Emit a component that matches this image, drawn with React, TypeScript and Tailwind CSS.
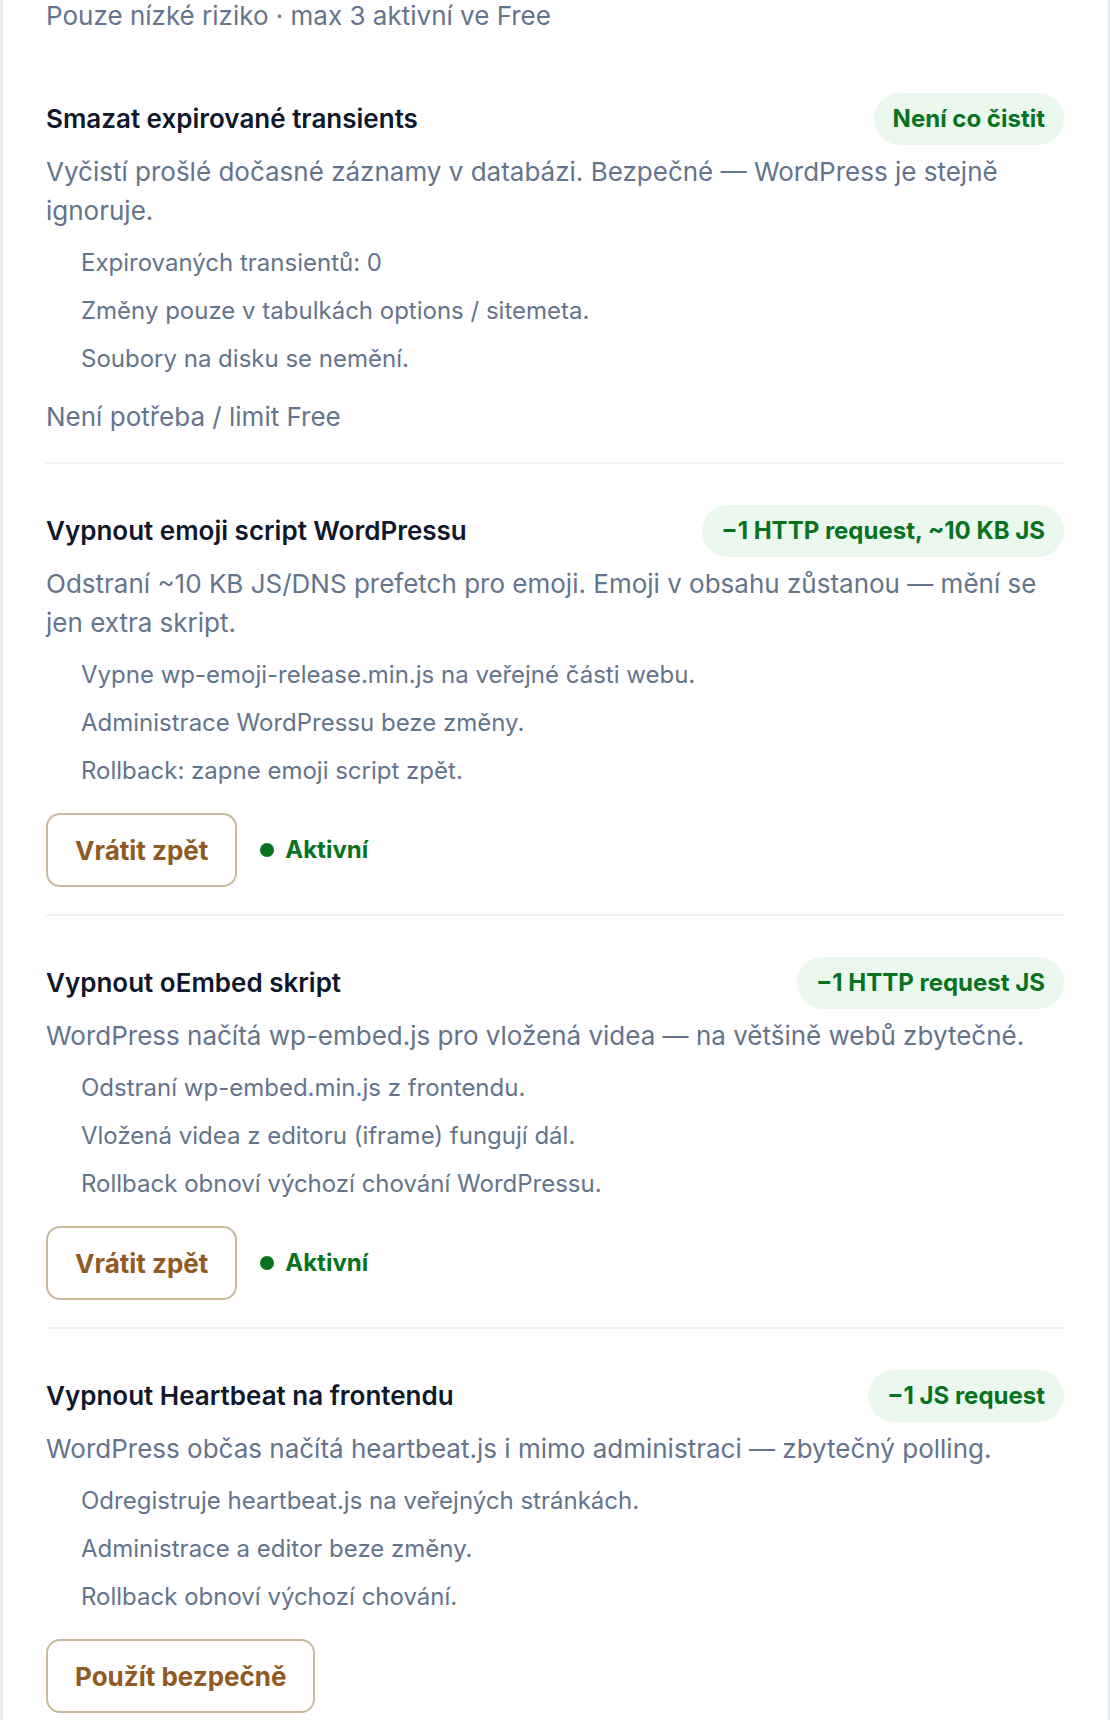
import React from "react";

type Tweak = {
  id: string;
  title: string;
  badge: string;
  description: string;
  notes: string[];
  state: "empty" | "active" | "idle";
};

const TWEAKS: Tweak[] = [
  {
    id: "transients",
    title: "Smazat expirované transients",
    badge: "Není co čistit",
    description: "Vyčistí prošlé dočasné záznamy v databázi. Bezpečné — WordPress je stejně ignoruje.",
    notes: [
      "Expirovaných transientů: 0",
      "Změny pouze v tabulkách options / sitemeta.",
      "Soubory na disku se nemění.",
    ],
    state: "empty",
  },
  {
    id: "emoji",
    title: "Vypnout emoji script WordPressu",
    badge: "−1 HTTP request, ~10 KB JS",
    description: "Odstraní ~10 KB JS/DNS prefetch pro emoji. Emoji v obsahu zůstanou — mění se jen extra skript.",
    notes: [
      "Vypne wp-emoji-release.min.js na veřejné části webu.",
      "Administrace WordPressu beze změny.",
      "Rollback: zapne emoji script zpět.",
    ],
    state: "active",
  },
  {
    id: "oembed",
    title: "Vypnout oEmbed skript",
    badge: "−1 HTTP request JS",
    description: "WordPress načítá wp-embed.js pro vložená videa — na většině webů zbytečné.",
    notes: [
      "Odstraní wp-embed.min.js z frontendu.",
      "Vložená videa z editoru (iframe) fungují dál.",
      "Rollback obnoví výchozí chování WordPressu.",
    ],
    state: "active",
  },
  {
    id: "heartbeat",
    title: "Vypnout Heartbeat na frontendu",
    badge: "−1 JS request",
    description: "WordPress občas načítá heartbeat.js i mimo administraci — zbytečný polling.",
    notes: [
      "Odregistruje heartbeat.js na veřejných stránkách.",
      "Administrace a editor beze změny.",
      "Rollback obnoví výchozí chování.",
    ],
    state: "idle",
  },
];

const OutlineButton = ({ children }: { children: React.ReactNode }) => (
  <button
    type="button"
    className="h-[74px] rounded-[14px] border-2 border-[#cab99f] bg-white px-[27px] text-[26px] font-bold leading-[33px] text-[#8f5a23]"
  >
    {children}
  </button>
);

const TweakRow = ({ tweak, first }: { tweak: Tweak; first: boolean }) => (
  <div className={first ? "pb-[27px]" : "border-t-2 border-[#eef1f5] pt-[41px] pb-[27px]"}>
    <div className="flex min-h-[52px] items-center justify-between gap-6">
      <h3 className="text-[26px] font-semibold leading-[32px] text-[#0f172a]">{tweak.title}</h3>
      <span className="flex h-[52px] shrink-0 items-center rounded-full bg-[#ebf8ee] px-[19px] text-[24px] font-bold text-[#08721f]">
        {tweak.badge}
      </span>
    </div>
    <p className="mt-[7px] text-[26px] leading-[39px] text-[#64748b]">{tweak.description}</p>
    <ul className="mt-[16px] space-y-[14px] pl-[35px]">
      {tweak.notes.map(note => (
        <li key={note} className="text-[24px] leading-[34px] text-[#64748b]">
          {note}
        </li>
      ))}
    </ul>
    {tweak.state === "empty" && (
      <p className="mt-[23px] text-[26px] leading-[36px] text-[#64748b]">Není potřeba / limit Free</p>
    )}
    {tweak.state === "active" && (
      <div className="mt-[25px] flex items-center gap-[23px]">
        <OutlineButton>Vrátit zpět</OutlineButton>
        <span className="flex items-center gap-[11px] text-[24px] font-bold text-[#08721f]">
          <span className="h-[14px] w-[14px] rounded-full bg-[#08721f]" />
          Aktivní
        </span>
      </div>
    )}
    {tweak.state === "idle" && (
      <div className="mt-[25px] flex items-center">
        <OutlineButton>Použít bezpečně</OutlineButton>
      </div>
    )}
  </div>
);

export default function App() {
  return (
    <div className="min-h-[1720px] w-[1110px] overflow-hidden border-l-[3px] border-r-2 border-[#e6e9f0] bg-white pl-[43px] pr-[44px] font-['Inter',sans-serif]">
      <p className="text-[26px] leading-[31px] text-[#64748b]">Pouze nízké riziko · max 3 aktivní ve Free</p>
      <div className="mt-[62px]">
        {TWEAKS.map((tweak, i) => (
          <TweakRow key={tweak.id} tweak={tweak} first={i === 0} />
        ))}
      </div>
    </div>
  );
}
